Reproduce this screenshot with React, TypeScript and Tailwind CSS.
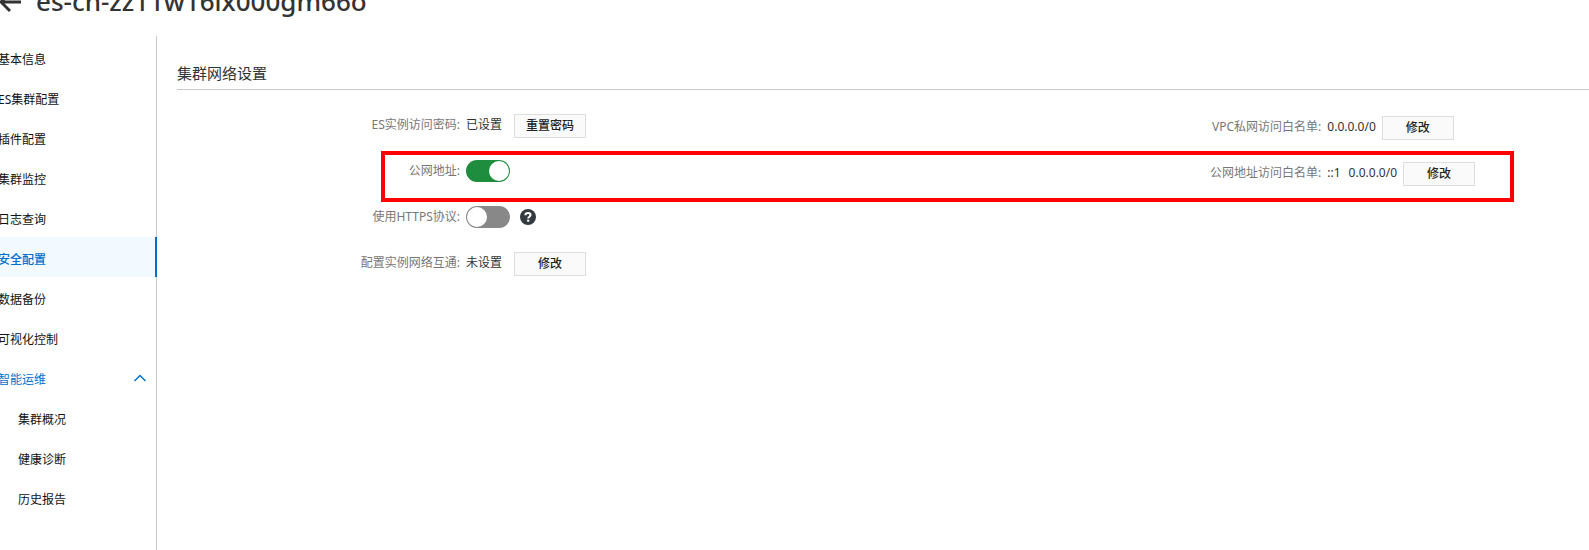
import type { ReactNode } from 'react';

const menu = ['基本信息', 'ES集群配置', '插件配置', '集群监控', '日志查询', '安全配置', '数据备份', '可视化控制'];
const subMenu = ['集群概况', '健康诊断', '历史报告'];
const active = '安全配置';

function Sidebar() {
  return (
    <nav className="flex w-[157px] shrink-0 flex-col border-r border-[#c8c8c8] pt-px text-xs text-[#111]">
      {menu.map((item) => (
        <a
          key={item}
          href="#"
          className={
            item === active
              ? '-mr-px flex h-10 items-center border-r-2 border-[#0070cc] bg-[#f2f9ff] pt-1.5 font-medium text-[#0070cc]'
              : 'flex h-10 items-center pt-1.5'
          }
        >
          <span className="-ml-0.5">{item}</span>
        </a>
      ))}
      <button type="button" className="flex h-10 items-center justify-between pt-1.5 pr-2.5 text-[#0070cc]">
        <span className="-ml-0.5">智能运维</span>
        <svg viewBox="0 0 12 12" className="mb-1 size-3" fill="none" stroke="currentColor" strokeWidth="1.5" aria-hidden="true">
          <path d="M0.5 9 6 3.5 11.500 9" />
        </svg>
      </button>
      {subMenu.map((item) => (
        <a key={item} href="#" className="flex h-10 items-center pt-1.5 pl-[18px]">
          {item}
        </a>
      ))}
    </nav>
  );
}

function Field({ label, children }: { label: string; children?: ReactNode }) {
  return (
    <div className="flex items-center whitespace-nowrap">
      <span className="w-[283px] shrink-0 text-right text-[#777]">{label}:</span>
      <div className="flex items-center pl-1.5 text-[#333]">{children}</div>
    </div>
  );
}

function Button({ children }: { children: string }) {
  return (
    <button type="button" className="mt-0.5 h-6 w-18 border border-[#dedede] bg-[#fafafa] font-medium text-[#222]">
      {children}
    </button>
  );
}

function Toggle({ label, on }: { label: string; on?: boolean }) {
  return (
    <label className="flex">
      <input type="checkbox" role="switch" aria-label={label} defaultChecked={on} className="peer sr-only" />
      <span className="flex h-[22px] w-11 rounded-full bg-[#888] p-px peer-checked:justify-end peer-checked:bg-[#1e8e3e]">
        <span className="size-5 rounded-full bg-white" />
      </span>
    </label>
  );
}

function HelpIcon() {
  return (
    <svg viewBox="0 0 16 16" className="ml-2.5 size-4" aria-hidden="true">
      <circle cx="8" cy="8" r="8" fill="#333a40" />
      <path d="M5.4 6.3C5.4 4.8 6.5 4 8 4s2.5.8 2.500 2.100c0 1.600-2.300 1.600-2.300 3.300" fill="none" stroke="#fff" strokeWidth="2" />
      <rect x="7.100" y="10.700" width="2.200" height="2" fill="#fff" />
    </svg>
  );
}

const row = 'relative grid h-[46px] grid-cols-[61fr_39fr] items-center';

export default function App() {
  return (
    <div className="flex min-h-screen flex-col overflow-hidden bg-white font-['Noto_Sans','Noto_Sans_CJK_SC',sans-serif]">
      <header className="-mt-5 flex h-14 items-start gap-3.5 text-[#333]">
        <svg viewBox="0 0 24 24" className="-ml-0.5 mt-2.5 size-6" fill="none" stroke="currentColor" strokeWidth="3" aria-hidden="true">
          <path d="M23 12H3M12 3l-9 9 9 9" />
        </svg>
        <h1 className="text-[26px] leading-[42px] font-medium">es-cn-zz11w16lx000gm66o</h1>
      </header>

      <div className="flex grow">
        <Sidebar />
        <main className="min-w-0 grow pl-5 text-xs">
          <h2 className="border-b border-[#c8c8c8] pt-[27px] pb-[5px] text-[15px] leading-[21px] text-[#333]">集群网络设置</h2>
          <div className="pt-3">
            <div className={row}>
              <Field label="ES实例访问密码">
                <span className="pr-3">已设置</span>
                <Button>重置密码</Button>
              </Field>
              <div className="pt-1">
                <Field label="VPC私网访问白名单">
                  <span className="pr-1.5">0.0.0.0/0</span>
                  <Button>修改</Button>
                </Field>
              </div>
            </div>
            <div className={row}>
              <Field label="公网地址">
                <Toggle label="公网地址" on />
              </Field>
              <div className="pt-1">
                <Field label="公网地址访问白名单">
                  <span className="pr-2">::1</span>
                  <span className="pr-1.5">0.0.0.0/0</span>
                  <Button>修改</Button>
                </Field>
              </div>
              {/* highlight frame around the public address row */}
              <div className="pointer-events-none absolute top-[3px] right-[75px] -bottom-2 left-[204px] border-4 border-[#ff0000]" />
            </div>
            <div className={row}>
              <Field label="使用HTTPS协议">
                <Toggle label="使用HTTPS协议" />
                <HelpIcon />
              </Field>
            </div>
            <div className={row}>
              <Field label="配置实例网络互通">
                <span className="pr-3">未设置</span>
                <Button>修改</Button>
              </Field>
            </div>
          </div>
        </main>
      </div>
    </div>
  );
}
